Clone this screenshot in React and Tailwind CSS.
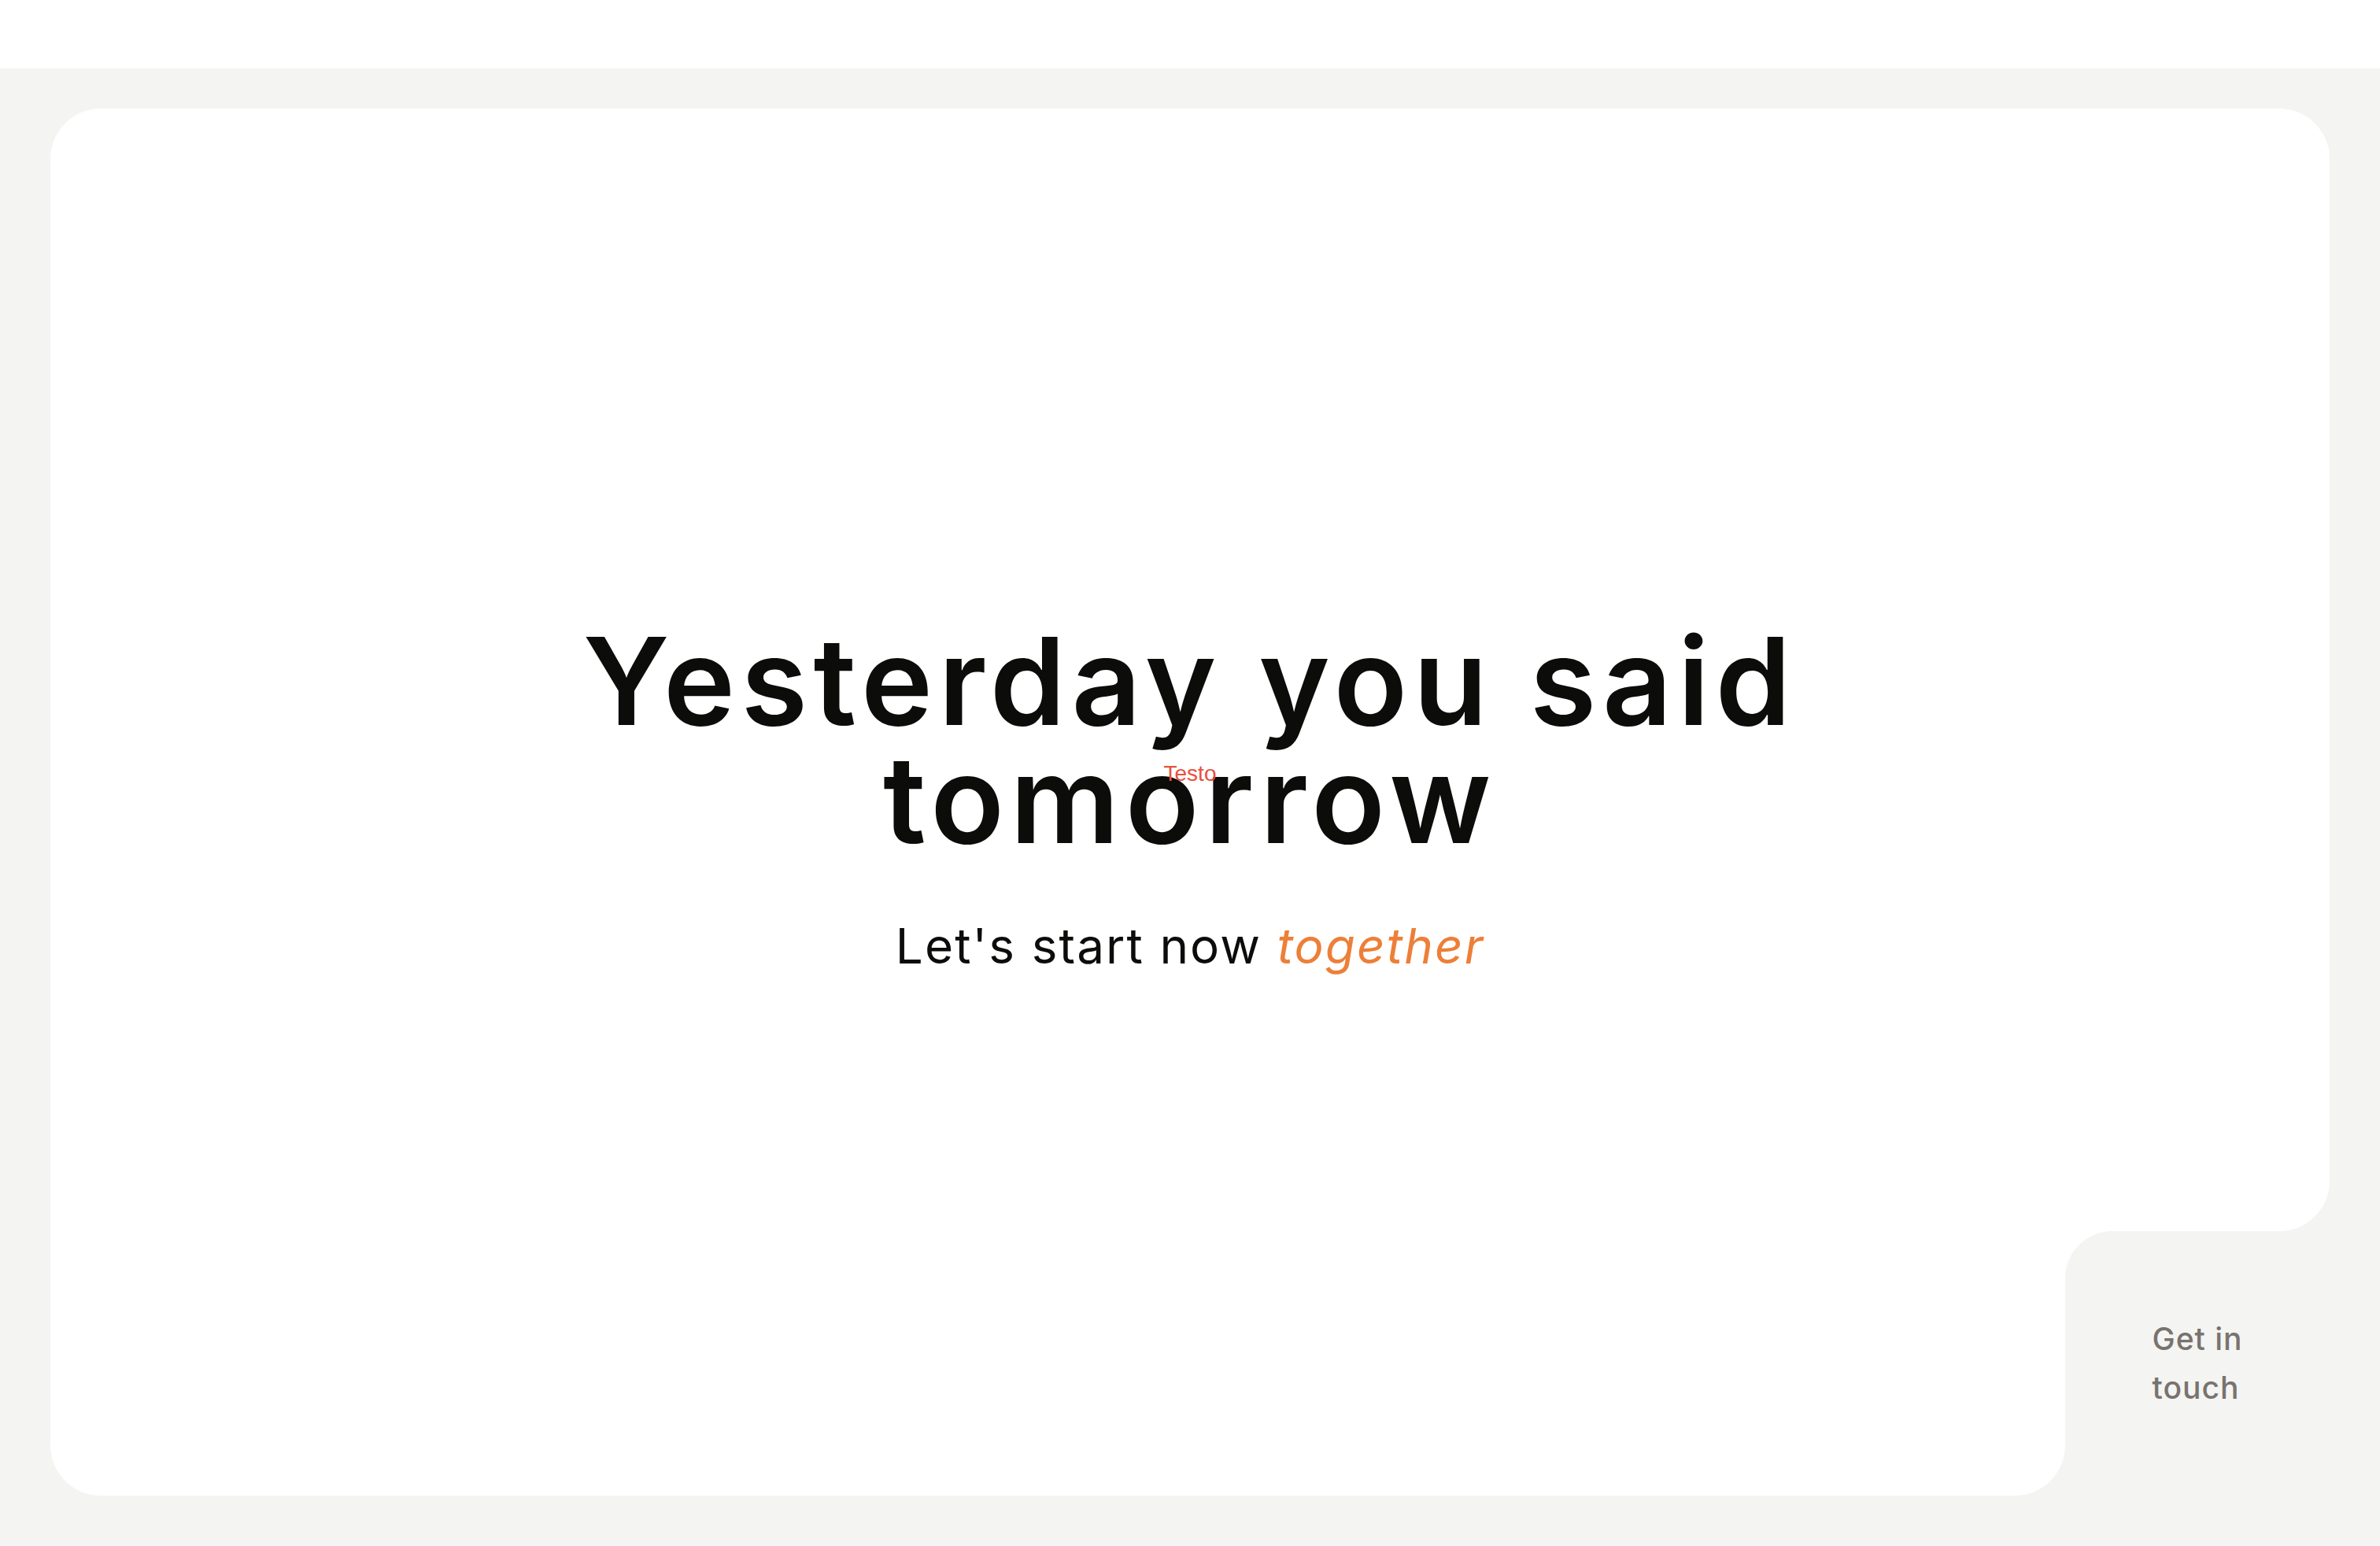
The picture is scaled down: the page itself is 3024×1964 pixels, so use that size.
import React from 'react';

const InvertedCorner = ({ className }) => (
    <div className={`absolute w-16 h-16 bg-[#f4f4f2] ${className}`}>
        <div className="w-full h-full bg-white rounded-br-[64px]" />
    </div>
);

export default function App() {
    return (
        <div className="min-h-screen flex flex-col bg-white font-['Inter',sans-serif]">
            {/* Top bar */}
            <header className="h-[87px] bg-white shrink-0" />

            {/* Hero */}
            <main className="flex-1 flex bg-[#f4f4f2] px-16 pt-[51px] pb-16">
                <section className="relative flex-1 flex flex-col items-center justify-center bg-white rounded-[64px]">
                    <div className="relative">
                        <h1 className="text-center text-[154px] leading-[150px] font-semibold tracking-[7.5px] text-[#0c0c0a]">
                            Yesterday you said
                            <br />
                            tomorrow
                        </h1>
                        <span className="absolute left-1/2 -translate-x-1/2 top-[177px] text-[28px] leading-[32px] text-[#e9503e] font-['Liberation_Sans',Arial,sans-serif]">
                            Testo
                        </span>
                    </div>
                    <p className="mt-[65px] text-[62px] leading-[93px] tracking-[2.1px] text-[#0c0c0a]">
                        Let's start now <em className="italic text-[#ed7f38]">together</em>
                    </p>

                    {/* Get in touch notch */}
                    <InvertedCorner className="right-0 bottom-[336px]" />
                    <InvertedCorner className="right-[336px] bottom-0" />
                    <a
                        href="#"
                        className="absolute right-0 bottom-0 w-[336px] h-[336px] flex items-center justify-center bg-[#f4f4f2] rounded-tl-[60px]"
                    >
                        <span className="text-[39px] leading-[62px] tracking-[1px] font-medium text-[#78736e]">
                            Get in
                            <br />
                            touch
                        </span>
                    </a>
                </section>
            </main>
        </div>
    );
}
